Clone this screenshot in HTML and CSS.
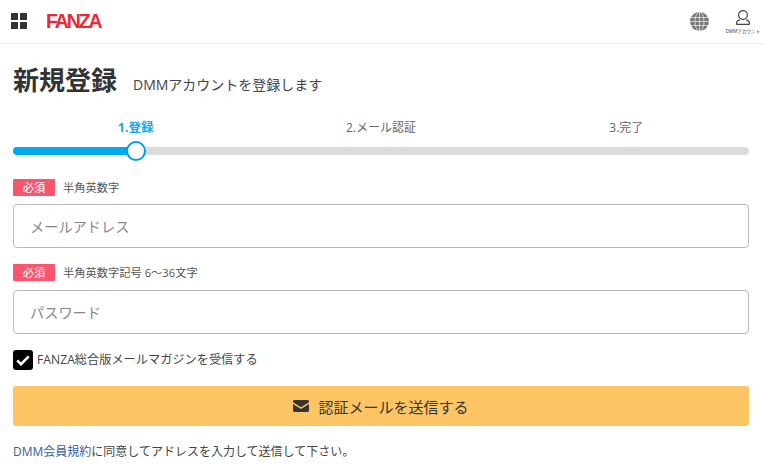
FILE: index.html
```html
<!DOCTYPE html>
<html lang="ja">
<head>
  <meta charset="UTF-8" />
  <title>新規登録</title>
  <link rel="stylesheet" href="styles.css">
</head>
<body>
  <header class="site-header">
    <div class="header-left">
      <svg class="menu-icon" width="16" height="16" viewBox="0 0 16 16">
        <rect x="0" y="0" width="7" height="7" rx="0.5"/>
        <rect x="9" y="0" width="7" height="7" rx="0.5"/>
        <rect x="0" y="9" width="7" height="7" rx="0.5"/>
        <rect x="9" y="9" width="7" height="7" rx="0.5"/>
      </svg>
      <span class="logo">FANZA</span>
    </div>
    <div class="header-right">
      <svg class="globe" width="19" height="19" viewBox="0 0 19 19">
        <circle cx="9.5" cy="9.5" r="9.5" fill="#777"/>
        <g fill="none" stroke="#ddd" stroke-width="0.9">
          <ellipse cx="9.5" cy="9.5" rx="4.5" ry="9.5"/>
          <path d="M9.5 0V19M1 5.5H18M0 9.5H19M1 13.5H18"/>
        </g>
      </svg>
      <div class="account">
        <svg width="14" height="15" viewBox="0 0 14 15" fill="none" stroke="#444" stroke-width="1.2">
          <circle cx="7" cy="5" r="4.4"/>
          <path d="M.6 14.4V12.8C.6 10.9 2.4 10.2 3.8 9.8M13.4 14.4V12.8C13.4 10.9 11.6 10.2 10.2 9.8M.6 14.4H13.4"/>
        </svg>
        <span class="account-label">DMMアカウント</span>
      </div>
    </div>
  </header>

  <main class="content">
    <div class="title-row">
      <h1>新規登録</h1>
      <p>DMMアカウントを登録します</p>
    </div>

    <ol class="steps">
      <li class="active">1.登録</li>
      <li>2.メール認証</li>
      <li>3.完了</li>
    </ol>
    <div class="track">
      <div class="track-fill"></div>
      <div class="track-thumb"></div>
    </div>

    <div class="field-label first"><span class="required">必須</span><span>半角英数字</span></div>
    <input class="text-input" type="text" placeholder="メールアドレス" />

    <div class="field-label"><span class="required">必須</span><span>半角英数字記号 6〜36文字</span></div>
    <input class="text-input" type="password" placeholder="パスワード" />

    <label class="check-row">
      <span class="check-box">
        <svg width="14" height="11" viewBox="0 0 14 11" fill="none" stroke="#fff" stroke-width="2.6">
          <path d="M1.2 5.5L5 9.2L12.8 1.4"/>
        </svg>
      </span>
      FANZA総合版メールマガジンを受信する
    </label>

    <button class="submit" type="button">
      <svg width="16" height="12" viewBox="0 0 16 12">
        <path fill="#333" d="M1.5 0H14.5C15.3 0 16 .7 16 1.5V2.2L8 7.2L0 2.2V1.5C0 .7.7 0 1.5 0ZM0 4L8 9L16 4V10.5C16 11.3 15.3 12 14.5 12H1.5C.7 12 0 11.3 0 10.5Z"/>
      </svg>
      認証メールを送信する
    </button>

    <p class="note"><a href="#">DMM会員規約</a>に同意してアドレスを入力して送信して下さい。</p>
  </main>
</body>
</html>
```

FILE: styles.css
```css
body { margin: 0; background: #fff; color: #333; font-family: "Open Sans", "Noto Sans CJK JP", sans-serif; overflow: hidden; }
.site-header { box-sizing: border-box; height: 44px; display: flex; justify-content: space-between; align-items: center; padding: 0 4px 1px 11px; border-bottom: 1px solid #f0f0f0; }
.header-left { display: flex; align-items: center; gap: 19px; }
.menu-icon { fill: #333; display: block; }
.logo { font-family: "Liberation Sans", sans-serif; font-weight: bold; font-size: 19.5px; letter-spacing: -2.1px; color: #ee2737; }
.header-right { display: flex; align-items: center; gap: 16px; }
.account { width: 36px; display: flex; flex-direction: column; align-items: center; gap: 3px; padding-top: 1px; }
.account-label { font-size: 4.6px; line-height: 6px; color: #333; white-space: nowrap; }

.content { padding: 0 16px 0 13px; }
.title-row { display: flex; align-items: baseline; gap: 16px; padding-top: 18px; }
h1 { margin: 0; font-size: 26px; line-height: 36px; font-weight: 700; color: #333; }
.title-row p { margin: 0; font-size: 14px; color: #444; }

.steps { list-style: none; margin: 21px 0 0; padding: 0; display: grid; grid-template-columns: 1fr 1fr 1fr; font-size: 12px; line-height: 18px; text-align: center; color: #666; }
.steps li.active { color: #1ba6e8; font-weight: 700; font-size: 12.5px; }
.track { position: relative; height: 8px; margin-top: 10px; background: #dcdcdc; border-radius: 4px; }
.track-fill { width: 123px; height: 8px; background: #00a9f0; border-radius: 4px; }
.track-thumb { position: absolute; left: 113px; top: -6px; width: 16px; height: 16px; background: #fff; border: 2px solid #00a0e9; border-radius: 50%; }

.field-label { display: flex; align-items: center; gap: 8px; margin-top: 16px; font-size: 11.25px; line-height: 17px; color: #555; }
.field-label.first { margin-top: 24px; }
.required { width: 42px; height: 17px; background: #f8566e; color: #fff; text-align: center; border-radius: 1px; }
.text-input { display: block; box-sizing: border-box; width: 100%; height: 44px; margin-top: 8px; padding: 0 16px; border: 1px solid #bbb; border-radius: 4px; font: inherit; font-size: 14.2px; color: #333; outline: none; }
.text-input::placeholder { color: #888; opacity: 1; }
.text-input[type="password"] { margin-top: 9px; }

.check-row { display: flex; align-items: center; gap: 4px; margin-top: 16px; font-size: 12.2px; line-height: 20px; color: #444; }
.check-box { width: 20px; height: 20px; background: #000; border-radius: 3px; display: flex; align-items: center; justify-content: center; }
.submit { display: flex; align-items: center; justify-content: center; gap: 9px; width: 100%; height: 40px; margin-top: 16px; background: #fdc564; border: none; border-radius: 3px; font: inherit; font-size: 15px; color: #333; cursor: pointer; }
.note { margin: 16px 0 0; font-size: 12px; line-height: 20px; color: #444; }
.note a { color: #3d5a98; text-decoration: none; }
```
